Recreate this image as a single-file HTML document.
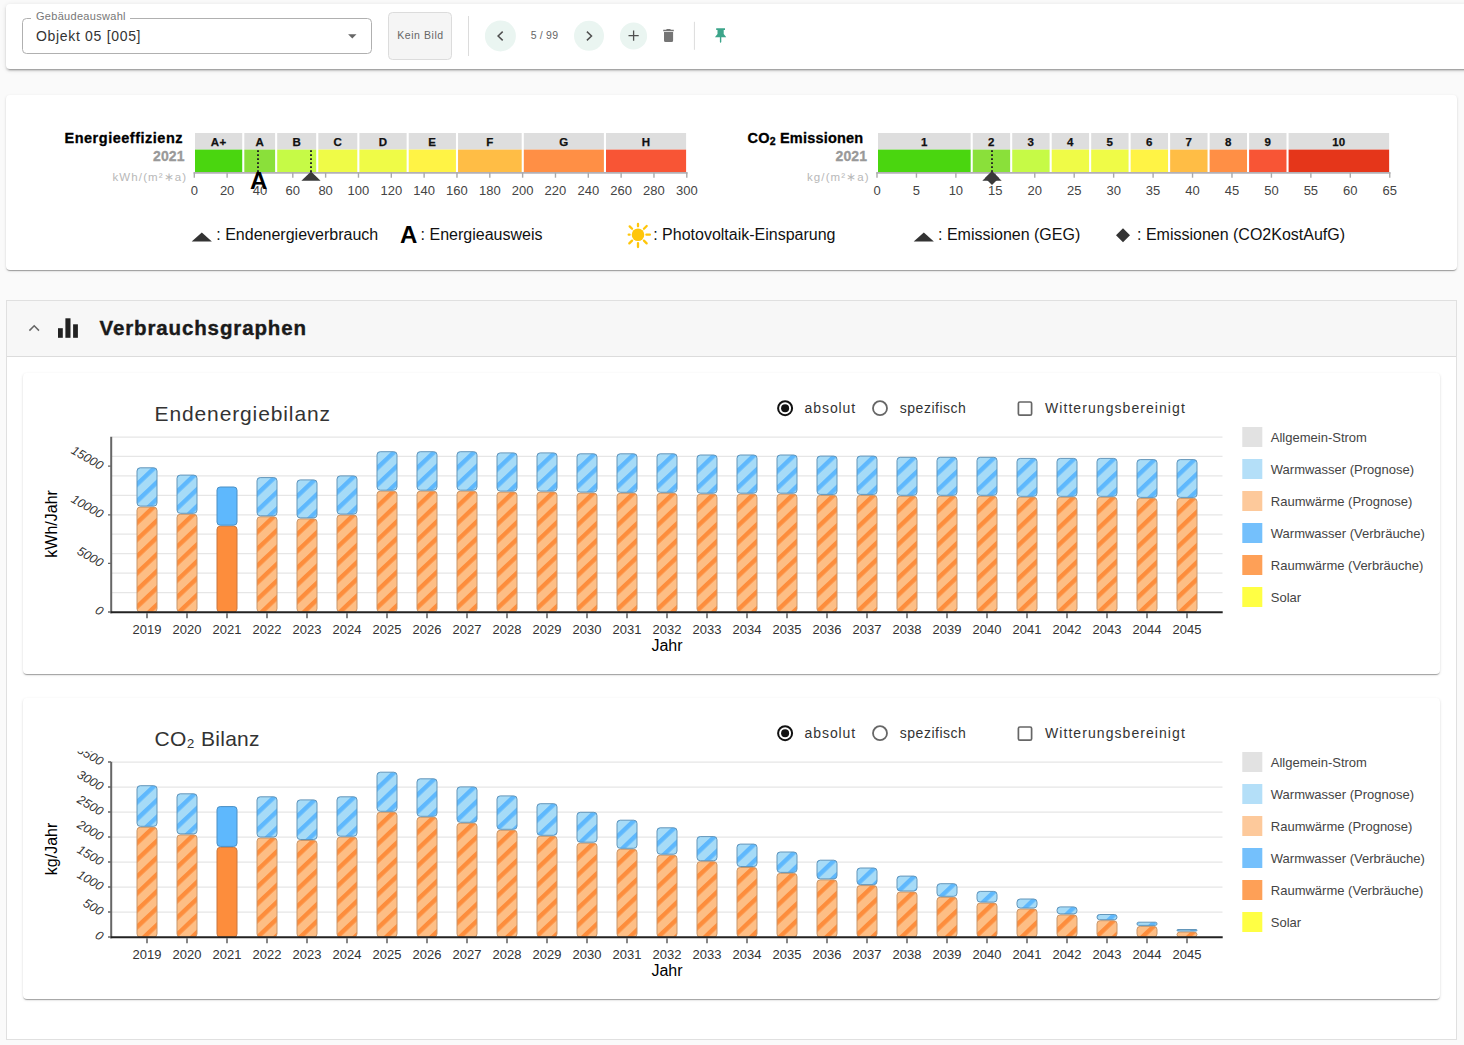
<!DOCTYPE html>
<html lang="de"><head><meta charset="utf-8"><title>Verbrauchsgraphen</title><style>
html,body{margin:0;padding:0}
body{width:1464px;height:1045px;overflow:hidden;background:#fafafa;position:relative;font-family:"Liberation Sans",sans-serif}
.topbar{position:absolute;left:6px;top:4px;width:1470px;height:65px;background:#fff;border-radius:4px;box-shadow:0 3px 1px -2px rgba(0,0,0,.2),0 2px 2px 0 rgba(0,0,0,.14),0 1px 5px 0 rgba(0,0,0,.12)}
.card1{position:absolute;left:6px;top:95px;width:1451px;height:175px;background:#fff;border-radius:4px;box-shadow:0 2px 1px -1px rgba(0,0,0,.2),0 1px 1px 0 rgba(0,0,0,.14),0 1px 3px 0 rgba(0,0,0,.12)}
.panel{position:absolute;left:6px;top:300px;width:1449px;height:738px;background:#fff;border:1px solid #e0e0e0;box-sizing:content-box}
.phead{position:absolute;left:0;top:0;width:100%;height:55px;background:#f7f7f7;border-bottom:1px solid #dcdcdc}
.ccard{position:absolute;left:23px;width:1417px;height:301px;background:#fff;border-radius:4px;box-shadow:0 2px 1px -1px rgba(0,0,0,.2),0 1px 1px 0 rgba(0,0,0,.14),0 1px 3px 0 rgba(0,0,0,.12)}
.ov{position:absolute;left:0;top:0}
</style></head><body>
<div class="topbar"></div>
<div class="card1"></div>
<div class="panel"><div class="phead"></div></div>
<div class="ccard" style="top:373px"></div>
<div class="ccard" style="top:698px"></div>

<svg class="ov" width="1464" height="1045" viewBox="0 0 1464 1045" font-family='"Liberation Sans", sans-serif'>
<defs>
<pattern id="po" width="12.2" height="12.2" patternUnits="userSpaceOnUse" patternTransform="translate(13.3,0) rotate(46.5)"><rect x="-1" y="-1" width="15" height="15" fill="#fdbe85"/><rect x="0" y="-1" width="4.4" height="15" fill="#fd8d3c"/></pattern>
<pattern id="pb" width="12.2" height="12.2" patternUnits="userSpaceOnUse" patternTransform="translate(13.3,0.9) rotate(46.5)"><rect x="-1" y="-1" width="15" height="15" fill="#a6dbf7"/><rect x="0" y="-1" width="4.4" height="15" fill="#5eb8fd"/></pattern>
</defs>
<rect x="22.5" y="18.5" width="349" height="35" rx="4" fill="none" stroke="#b0b0b0" stroke-width="1"/>
<rect x="31" y="14" width="99" height="8" fill="#fff"/>
<text x="36" y="19.8" font-size="11" fill="#777" textLength="89.5" lengthAdjust="spacing">Gebäudeauswahl</text>
<text x="36" y="41" font-size="14" fill="#333" textLength="104.5" lengthAdjust="spacing">Objekt 05 [005]</text>
<path d="M348.1 34.2 h8.4 l-4.2 4.2 z" fill="#666"/>
<rect x="388.5" y="12.5" width="63" height="47" rx="4" fill="#f5f5f5" stroke="#dcdcdc"/>
<text x="397.2" y="39" font-size="10.5" fill="#666" textLength="46" lengthAdjust="spacing">Kein Bild</text>
<rect x="468" y="16" width="1" height="40" fill="#dcdcdc"/>
<circle cx="500.4" cy="35.9" r="15.5" fill="#eaf5f1"/>
<path d="M502.7 31.6 L498.1 36 L502.7 40.4" fill="none" stroke="#505050" stroke-width="1.5"/>
<text x="530.7" y="38.8" font-size="10.5" fill="#666" textLength="27.3" lengthAdjust="spacing">5 / 99</text>
<circle cx="589" cy="35.8" r="15" fill="#eaf5f1"/>
<path d="M586.9 31.6 L591.5 36 L586.9 40.4" fill="none" stroke="#505050" stroke-width="1.5"/>
<circle cx="633.5" cy="36" r="13.6" fill="#eaf5f1"/>
<path d="M633.6 30.5 v10.2 M628.5 35.6 h10.2" fill="none" stroke="#505050" stroke-width="1.3"/>
<path d="M664 32.1 h9.1 v8.4 a1.5 1.5 0 0 1 -1.5 1.5 h-6.1 a1.5 1.5 0 0 1 -1.5 -1.5 z M663.2 31.3 v-1.6 h2.9 l0.7 -0.7 h3.4 l0.7 0.7 h2.9 v1.6 z" fill="#757575"/>
<rect x="693.9" y="21.8" width="1" height="28" fill="#dcdcdc"/>
<path d="M716.2 28.3 h8.8 v1.7 h-1.3 v4.1 l2.4 2.8 v0.3 h-4.8 v4.8 l-0.7 1 l-0.7 -1 v-4.8 h-4.8 v-0.3 l2.4 -2.8 v-4.1 h-1.3 z" fill="#3da58a"/>
<rect x="195.00" y="133" width="47.22" height="16.6" fill="#dedede"/>
<rect x="195.00" y="149.6" width="47.22" height="22.4" fill="#4ad60f"/>
<text x="218.61" y="145.8" font-size="11.5" fill="#111" font-weight="bold" text-anchor="middle" style="letter-spacing:0.3px" stroke="#111" stroke-width="0.25">A+</text>
<rect x="244.32" y="133" width="30.78" height="16.6" fill="#dedede"/>
<rect x="244.32" y="149.6" width="30.78" height="22.4" fill="#8ae03a"/>
<text x="259.71" y="145.8" font-size="11.5" fill="#111" font-weight="bold" text-anchor="middle" style="letter-spacing:0.3px" stroke="#111" stroke-width="0.25">A</text>
<rect x="277.20" y="133" width="39.00" height="16.6" fill="#dedede"/>
<rect x="277.20" y="149.6" width="39.00" height="22.4" fill="#c6fa46"/>
<text x="296.70" y="145.8" font-size="11.5" fill="#111" font-weight="bold" text-anchor="middle" style="letter-spacing:0.3px" stroke="#111" stroke-width="0.25">B</text>
<rect x="318.30" y="133" width="39.00" height="16.6" fill="#dedede"/>
<rect x="318.30" y="149.6" width="39.00" height="22.4" fill="#effb47"/>
<text x="337.80" y="145.8" font-size="11.5" fill="#111" font-weight="bold" text-anchor="middle" style="letter-spacing:0.3px" stroke="#111" stroke-width="0.25">C</text>
<rect x="359.40" y="133" width="47.22" height="16.6" fill="#dedede"/>
<rect x="359.40" y="149.6" width="47.22" height="22.4" fill="#effb47"/>
<text x="383.01" y="145.8" font-size="11.5" fill="#111" font-weight="bold" text-anchor="middle" style="letter-spacing:0.3px" stroke="#111" stroke-width="0.25">D</text>
<rect x="408.72" y="133" width="47.22" height="16.6" fill="#dedede"/>
<rect x="408.72" y="149.6" width="47.22" height="22.4" fill="#fff345"/>
<text x="432.33" y="145.8" font-size="11.5" fill="#111" font-weight="bold" text-anchor="middle" style="letter-spacing:0.3px" stroke="#111" stroke-width="0.25">E</text>
<rect x="458.04" y="133" width="63.66" height="16.6" fill="#dedede"/>
<rect x="458.04" y="149.6" width="63.66" height="22.4" fill="#ffbd45"/>
<text x="489.87" y="145.8" font-size="11.5" fill="#111" font-weight="bold" text-anchor="middle" style="letter-spacing:0.3px" stroke="#111" stroke-width="0.25">F</text>
<rect x="523.80" y="133" width="80.10" height="16.6" fill="#dedede"/>
<rect x="523.80" y="149.6" width="80.10" height="22.4" fill="#ff8f45"/>
<text x="563.85" y="145.8" font-size="11.5" fill="#111" font-weight="bold" text-anchor="middle" style="letter-spacing:0.3px" stroke="#111" stroke-width="0.25">G</text>
<rect x="606.00" y="133" width="80.10" height="16.6" fill="#dedede"/>
<rect x="606.00" y="149.6" width="80.10" height="22.4" fill="#f85535"/>
<text x="646.05" y="145.8" font-size="11.5" fill="#111" font-weight="bold" text-anchor="middle" style="letter-spacing:0.3px" stroke="#111" stroke-width="0.25">H</text>
<path d="M193.60000000000002 172.9 H687.5" stroke="#b3b0b6" stroke-width="1.7" fill="none"/>
<path d="M194.30 172.5 v5.2" stroke="#aaa" stroke-width="1.4" fill="none"/>
<text x="194.30" y="194.6" font-size="13" fill="#444" text-anchor="middle">0</text>
<path d="M227.13 172.5 v5.2" stroke="#aaa" stroke-width="1.4" fill="none"/>
<text x="227.13" y="194.6" font-size="13" fill="#444" text-anchor="middle">20</text>
<path d="M259.97 172.5 v5.2" stroke="#aaa" stroke-width="1.4" fill="none"/>
<text x="259.97" y="194.6" font-size="13" fill="#444" text-anchor="middle">40</text>
<path d="M292.80 172.5 v5.2" stroke="#aaa" stroke-width="1.4" fill="none"/>
<text x="292.80" y="194.6" font-size="13" fill="#444" text-anchor="middle">60</text>
<path d="M325.63 172.5 v5.2" stroke="#aaa" stroke-width="1.4" fill="none"/>
<text x="325.63" y="194.6" font-size="13" fill="#444" text-anchor="middle">80</text>
<path d="M358.47 172.5 v5.2" stroke="#aaa" stroke-width="1.4" fill="none"/>
<text x="358.47" y="194.6" font-size="13" fill="#444" text-anchor="middle">100</text>
<path d="M391.30 172.5 v5.2" stroke="#aaa" stroke-width="1.4" fill="none"/>
<text x="391.30" y="194.6" font-size="13" fill="#444" text-anchor="middle">120</text>
<path d="M424.13 172.5 v5.2" stroke="#aaa" stroke-width="1.4" fill="none"/>
<text x="424.13" y="194.6" font-size="13" fill="#444" text-anchor="middle">140</text>
<path d="M456.97 172.5 v5.2" stroke="#aaa" stroke-width="1.4" fill="none"/>
<text x="456.97" y="194.6" font-size="13" fill="#444" text-anchor="middle">160</text>
<path d="M489.80 172.5 v5.2" stroke="#aaa" stroke-width="1.4" fill="none"/>
<text x="489.80" y="194.6" font-size="13" fill="#444" text-anchor="middle">180</text>
<path d="M522.63 172.5 v5.2" stroke="#aaa" stroke-width="1.4" fill="none"/>
<text x="522.63" y="194.6" font-size="13" fill="#444" text-anchor="middle">200</text>
<path d="M555.47 172.5 v5.2" stroke="#aaa" stroke-width="1.4" fill="none"/>
<text x="555.47" y="194.6" font-size="13" fill="#444" text-anchor="middle">220</text>
<path d="M588.30 172.5 v5.2" stroke="#aaa" stroke-width="1.4" fill="none"/>
<text x="588.30" y="194.6" font-size="13" fill="#444" text-anchor="middle">240</text>
<path d="M621.13 172.5 v5.2" stroke="#aaa" stroke-width="1.4" fill="none"/>
<text x="621.13" y="194.6" font-size="13" fill="#444" text-anchor="middle">260</text>
<path d="M653.97 172.5 v5.2" stroke="#aaa" stroke-width="1.4" fill="none"/>
<text x="653.97" y="194.6" font-size="13" fill="#444" text-anchor="middle">280</text>
<path d="M686.80 172.5 v5.2" stroke="#aaa" stroke-width="1.4" fill="none"/>
<text x="686.80" y="194.6" font-size="13" fill="#444" text-anchor="middle">300</text>
<text x="182.5" y="143" font-size="14.5" fill="#000" font-weight="bold" text-anchor="end" textLength="118" lengthAdjust="spacing" stroke="#000" stroke-width="0.3">Energieeffizienz</text>
<text x="184.5" y="160.7" font-size="14" fill="#999" font-weight="bold" text-anchor="end" textLength="31.5" lengthAdjust="spacing" stroke="#999" stroke-width="0.3">2021</text>
<text x="186.2" y="181.2" font-size="11.5" fill="#b8b8b8" text-anchor="end" textLength="73.7" lengthAdjust="spacing">kWh/(m²∗a)</text>
<rect x="878.00" y="133" width="92.65" height="16.6" fill="#dedede"/>
<rect x="878.00" y="149.6" width="92.65" height="22.4" fill="#4ad60f"/>
<text x="924.33" y="145.8" font-size="11.5" fill="#111" font-weight="bold" text-anchor="middle" style="letter-spacing:0.3px" stroke="#111" stroke-width="0.25">1</text>
<rect x="972.75" y="133" width="37.38" height="16.6" fill="#dedede"/>
<rect x="972.75" y="149.6" width="37.38" height="22.4" fill="#8ae03a"/>
<text x="991.44" y="145.8" font-size="11.5" fill="#111" font-weight="bold" text-anchor="middle" style="letter-spacing:0.3px" stroke="#111" stroke-width="0.25">2</text>
<rect x="1012.23" y="133" width="37.38" height="16.6" fill="#dedede"/>
<rect x="1012.23" y="149.6" width="37.38" height="22.4" fill="#c6fa46"/>
<text x="1030.92" y="145.8" font-size="11.5" fill="#111" font-weight="bold" text-anchor="middle" style="letter-spacing:0.3px" stroke="#111" stroke-width="0.25">3</text>
<rect x="1051.71" y="133" width="37.38" height="16.6" fill="#dedede"/>
<rect x="1051.71" y="149.6" width="37.38" height="22.4" fill="#effb47"/>
<text x="1070.40" y="145.8" font-size="11.5" fill="#111" font-weight="bold" text-anchor="middle" style="letter-spacing:0.3px" stroke="#111" stroke-width="0.25">4</text>
<rect x="1091.19" y="133" width="37.38" height="16.6" fill="#dedede"/>
<rect x="1091.19" y="149.6" width="37.38" height="22.4" fill="#effb47"/>
<text x="1109.88" y="145.8" font-size="11.5" fill="#111" font-weight="bold" text-anchor="middle" style="letter-spacing:0.3px" stroke="#111" stroke-width="0.25">5</text>
<rect x="1130.67" y="133" width="37.38" height="16.6" fill="#dedede"/>
<rect x="1130.67" y="149.6" width="37.38" height="22.4" fill="#fff345"/>
<text x="1149.36" y="145.8" font-size="11.5" fill="#111" font-weight="bold" text-anchor="middle" style="letter-spacing:0.3px" stroke="#111" stroke-width="0.25">6</text>
<rect x="1170.15" y="133" width="37.38" height="16.6" fill="#dedede"/>
<rect x="1170.15" y="149.6" width="37.38" height="22.4" fill="#ffbd45"/>
<text x="1188.84" y="145.8" font-size="11.5" fill="#111" font-weight="bold" text-anchor="middle" style="letter-spacing:0.3px" stroke="#111" stroke-width="0.25">7</text>
<rect x="1209.63" y="133" width="37.38" height="16.6" fill="#dedede"/>
<rect x="1209.63" y="149.6" width="37.38" height="22.4" fill="#ff8f45"/>
<text x="1228.32" y="145.8" font-size="11.5" fill="#111" font-weight="bold" text-anchor="middle" style="letter-spacing:0.3px" stroke="#111" stroke-width="0.25">8</text>
<rect x="1249.11" y="133" width="37.38" height="16.6" fill="#dedede"/>
<rect x="1249.11" y="149.6" width="37.38" height="22.4" fill="#f85535"/>
<text x="1267.80" y="145.8" font-size="11.5" fill="#111" font-weight="bold" text-anchor="middle" style="letter-spacing:0.3px" stroke="#111" stroke-width="0.25">9</text>
<rect x="1288.59" y="133" width="100.55" height="16.6" fill="#dedede"/>
<rect x="1288.59" y="149.6" width="100.55" height="22.4" fill="#e5361a"/>
<text x="1338.87" y="145.8" font-size="11.5" fill="#111" font-weight="bold" text-anchor="middle" style="letter-spacing:0.3px" stroke="#111" stroke-width="0.25">10</text>
<path d="M876.3 172.9 H1390.45" stroke="#b3b0b6" stroke-width="1.7" fill="none"/>
<path d="M877.00 172.5 v5.2" stroke="#aaa" stroke-width="1.4" fill="none"/>
<text x="877.00" y="194.6" font-size="13" fill="#444" text-anchor="middle">0</text>
<path d="M916.44 172.5 v5.2" stroke="#aaa" stroke-width="1.4" fill="none"/>
<text x="916.44" y="194.6" font-size="13" fill="#444" text-anchor="middle">5</text>
<path d="M955.88 172.5 v5.2" stroke="#aaa" stroke-width="1.4" fill="none"/>
<text x="955.88" y="194.6" font-size="13" fill="#444" text-anchor="middle">10</text>
<path d="M995.33 172.5 v5.2" stroke="#aaa" stroke-width="1.4" fill="none"/>
<text x="995.33" y="194.6" font-size="13" fill="#444" text-anchor="middle">15</text>
<path d="M1034.77 172.5 v5.2" stroke="#aaa" stroke-width="1.4" fill="none"/>
<text x="1034.77" y="194.6" font-size="13" fill="#444" text-anchor="middle">20</text>
<path d="M1074.21 172.5 v5.2" stroke="#aaa" stroke-width="1.4" fill="none"/>
<text x="1074.21" y="194.6" font-size="13" fill="#444" text-anchor="middle">25</text>
<path d="M1113.65 172.5 v5.2" stroke="#aaa" stroke-width="1.4" fill="none"/>
<text x="1113.65" y="194.6" font-size="13" fill="#444" text-anchor="middle">30</text>
<path d="M1153.10 172.5 v5.2" stroke="#aaa" stroke-width="1.4" fill="none"/>
<text x="1153.10" y="194.6" font-size="13" fill="#444" text-anchor="middle">35</text>
<path d="M1192.54 172.5 v5.2" stroke="#aaa" stroke-width="1.4" fill="none"/>
<text x="1192.54" y="194.6" font-size="13" fill="#444" text-anchor="middle">40</text>
<path d="M1231.98 172.5 v5.2" stroke="#aaa" stroke-width="1.4" fill="none"/>
<text x="1231.98" y="194.6" font-size="13" fill="#444" text-anchor="middle">45</text>
<path d="M1271.42 172.5 v5.2" stroke="#aaa" stroke-width="1.4" fill="none"/>
<text x="1271.42" y="194.6" font-size="13" fill="#444" text-anchor="middle">50</text>
<path d="M1310.87 172.5 v5.2" stroke="#aaa" stroke-width="1.4" fill="none"/>
<text x="1310.87" y="194.6" font-size="13" fill="#444" text-anchor="middle">55</text>
<path d="M1350.31 172.5 v5.2" stroke="#aaa" stroke-width="1.4" fill="none"/>
<text x="1350.31" y="194.6" font-size="13" fill="#444" text-anchor="middle">60</text>
<path d="M1389.75 172.5 v5.2" stroke="#aaa" stroke-width="1.4" fill="none"/>
<text x="1389.75" y="194.6" font-size="13" fill="#444" text-anchor="middle">65</text>
<text x="863.2" y="143" font-size="14.5" fill="#000" font-weight="bold" text-anchor="end" textLength="115.7" lengthAdjust="spacing" stroke="#000" stroke-width="0.3">CO<tspan font-size="10.5" dy="1.5">2</tspan><tspan dy="-1.5"> Emissionen</tspan></text>
<text x="867" y="160.7" font-size="14" fill="#999" font-weight="bold" text-anchor="end" textLength="31.5" lengthAdjust="spacing" stroke="#999" stroke-width="0.3">2021</text>
<text x="868.7" y="181.2" font-size="11.5" fill="#b8b8b8" text-anchor="end" textLength="61.7" lengthAdjust="spacing">kg/(m²∗a)</text>
<path d="M258 150.2 V173" stroke="#222" stroke-width="1.9" stroke-dasharray="1.8 2.2" fill="none"/>
<text x="258.6" y="188.7" font-size="24" fill="#000" font-weight="bold" text-anchor="middle">A</text>
<path d="M311 150.2 V172" stroke="#222" stroke-width="1.9" stroke-dasharray="1.8 2.2" fill="none"/>
<path d="M311 171.6 L320.6 180.8 H301.4 Z" fill="#3a3a3a"/>
<path d="M992 150.2 V172" stroke="#222" stroke-width="1.9" stroke-dasharray="1.8 2.2" fill="none"/>
<path d="M992 171.6 L1001.7 180.8 H982.3 Z" fill="#3a3a3a"/>
<path d="M992 171 L999 178 L992 185 L985 178 Z" fill="#3a3a3a"/>
<path d="M201.8 232.4 L211.9 241.5 H191.7 Z" fill="#333"/>
<text x="216.3" y="240.2" font-size="16" fill="#111">: Endenergieverbrauch</text>
<text x="400" y="243" font-size="24" fill="#000" font-weight="bold">A</text>
<text x="420.6" y="240.2" font-size="16" fill="#111">: Energieausweis</text>
<circle cx="638.0" cy="234.7" r="6.3" fill="#ffc60a"/>
<path d="M646.40 234.70 L649.90 234.70 M643.94 240.64 L646.63 243.33 M638.00 243.10 L638.00 247.00 M632.06 240.64 L629.30 243.40 M629.60 234.70 L628.70 234.70 M632.06 228.76 L629.66 226.36 M638.00 226.30 L638.00 224.00 M643.94 228.76 L646.70 226.00 " stroke="#ffc60a" stroke-width="2.3" stroke-linecap="round" fill="none"/>
<text x="653.2" y="240.2" font-size="16" fill="#111">: Photovoltaik-Einsparung</text>
<path d="M923.8 232.4 L933.9 241.5 H913.7 Z" fill="#333"/>
<text x="938" y="240.2" font-size="16" fill="#111">: Emissionen (GEG)</text>
<path d="M1123 228.3 L1130 235.3 L1123 242.3 L1116 235.3 Z" fill="#333"/>
<text x="1137" y="240.2" font-size="16" fill="#111">: Emissionen (CO2KostAufG)</text>
<path d="M29.4 330.6 L34.2 325.8 L39 330.6" fill="none" stroke="#666" stroke-width="1.5"/>
<rect x="58" y="328.2" width="4.8" height="9.6" fill="#222"/><rect x="65.4" y="318.3" width="5.1" height="19.5" fill="#222"/><rect x="73.1" y="324.3" width="4.8" height="13.5" fill="#222"/>
<text x="99.5" y="335" font-size="20.5" fill="#1a1a1a" font-weight="bold" textLength="206.5" lengthAdjust="spacing" stroke="#1a1a1a" stroke-width="0.4">Verbrauchsgraphen</text>
<clipPath id="clip1"><rect x="22" y="426.4" width="1420" height="260"/></clipPath>
<text x="154.5" y="420.5" font-size="21" fill="#333" textLength="175.5" lengthAdjust="spacing">Endenergiebilanz</text>
<g clip-path="url(#clip1)">
<path d="M112 592.56 H1222.5" stroke="#e6e6e6" stroke-width="1.25" fill="none"/>
<path d="M112 573.11 H1222.5" stroke="#e6e6e6" stroke-width="1.25" fill="none"/>
<path d="M112 553.67 H1222.5" stroke="#e6e6e6" stroke-width="1.25" fill="none"/>
<path d="M112 534.22 H1222.5" stroke="#e6e6e6" stroke-width="1.25" fill="none"/>
<path d="M112 514.78 H1222.5" stroke="#e6e6e6" stroke-width="1.25" fill="none"/>
<path d="M112 495.33 H1222.5" stroke="#e6e6e6" stroke-width="1.25" fill="none"/>
<path d="M112 475.89 H1222.5" stroke="#e6e6e6" stroke-width="1.25" fill="none"/>
<path d="M112 456.44 H1222.5" stroke="#e6e6e6" stroke-width="1.25" fill="none"/>
<path d="M112 437.00 H1222.5" stroke="#e6e6e6" stroke-width="1.25" fill="none"/>
<g transform="translate(137,507.1)"><rect width="20" height="104.9" rx="3.2" fill="url(#po)" stroke="#c8966a" stroke-width="1"/></g>
<g transform="translate(137,467.8)"><rect width="20" height="38.3" rx="3.2" fill="url(#pb)" stroke="#6396ba" stroke-width="1"/></g>
<g transform="translate(177,514.3)"><rect width="20" height="97.7" rx="3.2" fill="url(#po)" stroke="#c8966a" stroke-width="1"/></g>
<g transform="translate(177,475.1)"><rect width="20" height="38.2" rx="3.2" fill="url(#pb)" stroke="#6396ba" stroke-width="1"/></g>
<g transform="translate(217,526.2)"><rect width="20" height="85.8" rx="3.2" fill="#fd8d3c" stroke="#c9773f" stroke-width="1"/></g>
<g transform="translate(217,487.0)"><rect width="20" height="38.2" rx="3.2" fill="#5eb8fd" stroke="#4a8fc4" stroke-width="1"/></g>
<g transform="translate(257,516.8)"><rect width="20" height="95.2" rx="3.2" fill="url(#po)" stroke="#c8966a" stroke-width="1"/></g>
<g transform="translate(257,477.6)"><rect width="20" height="38.2" rx="3.2" fill="url(#pb)" stroke="#6396ba" stroke-width="1"/></g>
<g transform="translate(297,518.9)"><rect width="20" height="93.1" rx="3.2" fill="url(#po)" stroke="#c8966a" stroke-width="1"/></g>
<g transform="translate(297,479.9)"><rect width="20" height="38.0" rx="3.2" fill="url(#pb)" stroke="#6396ba" stroke-width="1"/></g>
<g transform="translate(337,515.1)"><rect width="20" height="96.9" rx="3.2" fill="url(#po)" stroke="#c8966a" stroke-width="1"/></g>
<g transform="translate(337,475.9)"><rect width="20" height="38.2" rx="3.2" fill="url(#pb)" stroke="#6396ba" stroke-width="1"/></g>
<g transform="translate(377,491.2)"><rect width="20" height="120.8" rx="3.2" fill="url(#po)" stroke="#c8966a" stroke-width="1"/></g>
<g transform="translate(377,451.7)"><rect width="20" height="38.5" rx="3.2" fill="url(#pb)" stroke="#6396ba" stroke-width="1"/></g>
<g transform="translate(417,491.2)"><rect width="20" height="120.8" rx="3.2" fill="url(#po)" stroke="#c8966a" stroke-width="1"/></g>
<g transform="translate(417,451.7)"><rect width="20" height="38.5" rx="3.2" fill="url(#pb)" stroke="#6396ba" stroke-width="1"/></g>
<g transform="translate(457,491.2)"><rect width="20" height="120.8" rx="3.2" fill="url(#po)" stroke="#c8966a" stroke-width="1"/></g>
<g transform="translate(457,451.7)"><rect width="20" height="38.5" rx="3.2" fill="url(#pb)" stroke="#6396ba" stroke-width="1"/></g>
<g transform="translate(497,492.1)"><rect width="20" height="119.9" rx="3.2" fill="url(#po)" stroke="#c8966a" stroke-width="1"/></g>
<g transform="translate(497,452.9)"><rect width="20" height="38.2" rx="3.2" fill="url(#pb)" stroke="#6396ba" stroke-width="1"/></g>
<g transform="translate(537,492.1)"><rect width="20" height="119.9" rx="3.2" fill="url(#po)" stroke="#c8966a" stroke-width="1"/></g>
<g transform="translate(537,452.9)"><rect width="20" height="38.2" rx="3.2" fill="url(#pb)" stroke="#6396ba" stroke-width="1"/></g>
<g transform="translate(577,493.1)"><rect width="20" height="118.9" rx="3.2" fill="url(#po)" stroke="#c8966a" stroke-width="1"/></g>
<g transform="translate(577,453.8)"><rect width="20" height="38.3" rx="3.2" fill="url(#pb)" stroke="#6396ba" stroke-width="1"/></g>
<g transform="translate(617,493.3)"><rect width="20" height="118.7" rx="3.2" fill="url(#po)" stroke="#c8966a" stroke-width="1"/></g>
<g transform="translate(617,453.8)"><rect width="20" height="38.5" rx="3.2" fill="url(#pb)" stroke="#6396ba" stroke-width="1"/></g>
<g transform="translate(657,493.3)"><rect width="20" height="118.7" rx="3.2" fill="url(#po)" stroke="#c8966a" stroke-width="1"/></g>
<g transform="translate(657,453.8)"><rect width="20" height="38.5" rx="3.2" fill="url(#pb)" stroke="#6396ba" stroke-width="1"/></g>
<g transform="translate(697,494.2)"><rect width="20" height="117.8" rx="3.2" fill="url(#po)" stroke="#c8966a" stroke-width="1"/></g>
<g transform="translate(697,455.0)"><rect width="20" height="38.2" rx="3.2" fill="url(#pb)" stroke="#6396ba" stroke-width="1"/></g>
<g transform="translate(737,494.2)"><rect width="20" height="117.8" rx="3.2" fill="url(#po)" stroke="#c8966a" stroke-width="1"/></g>
<g transform="translate(737,455.0)"><rect width="20" height="38.2" rx="3.2" fill="url(#pb)" stroke="#6396ba" stroke-width="1"/></g>
<g transform="translate(777,494.2)"><rect width="20" height="117.8" rx="3.2" fill="url(#po)" stroke="#c8966a" stroke-width="1"/></g>
<g transform="translate(777,455.0)"><rect width="20" height="38.2" rx="3.2" fill="url(#pb)" stroke="#6396ba" stroke-width="1"/></g>
<g transform="translate(817,495.4)"><rect width="20" height="116.6" rx="3.2" fill="url(#po)" stroke="#c8966a" stroke-width="1"/></g>
<g transform="translate(817,456.1)"><rect width="20" height="38.3" rx="3.2" fill="url(#pb)" stroke="#6396ba" stroke-width="1"/></g>
<g transform="translate(857,495.4)"><rect width="20" height="116.6" rx="3.2" fill="url(#po)" stroke="#c8966a" stroke-width="1"/></g>
<g transform="translate(857,456.1)"><rect width="20" height="38.3" rx="3.2" fill="url(#pb)" stroke="#6396ba" stroke-width="1"/></g>
<g transform="translate(897,496.3)"><rect width="20" height="115.7" rx="3.2" fill="url(#po)" stroke="#c8966a" stroke-width="1"/></g>
<g transform="translate(897,457.3)"><rect width="20" height="38.0" rx="3.2" fill="url(#pb)" stroke="#6396ba" stroke-width="1"/></g>
<g transform="translate(937,496.3)"><rect width="20" height="115.7" rx="3.2" fill="url(#po)" stroke="#c8966a" stroke-width="1"/></g>
<g transform="translate(937,457.3)"><rect width="20" height="38.0" rx="3.2" fill="url(#pb)" stroke="#6396ba" stroke-width="1"/></g>
<g transform="translate(977,496.3)"><rect width="20" height="115.7" rx="3.2" fill="url(#po)" stroke="#c8966a" stroke-width="1"/></g>
<g transform="translate(977,457.3)"><rect width="20" height="38.0" rx="3.2" fill="url(#pb)" stroke="#6396ba" stroke-width="1"/></g>
<g transform="translate(1017,497.3)"><rect width="20" height="114.7" rx="3.2" fill="url(#po)" stroke="#c8966a" stroke-width="1"/></g>
<g transform="translate(1017,458.4)"><rect width="20" height="37.9" rx="3.2" fill="url(#pb)" stroke="#6396ba" stroke-width="1"/></g>
<g transform="translate(1057,497.3)"><rect width="20" height="114.7" rx="3.2" fill="url(#po)" stroke="#c8966a" stroke-width="1"/></g>
<g transform="translate(1057,458.4)"><rect width="20" height="37.9" rx="3.2" fill="url(#pb)" stroke="#6396ba" stroke-width="1"/></g>
<g transform="translate(1097,497.3)"><rect width="20" height="114.7" rx="3.2" fill="url(#po)" stroke="#c8966a" stroke-width="1"/></g>
<g transform="translate(1097,458.4)"><rect width="20" height="37.9" rx="3.2" fill="url(#pb)" stroke="#6396ba" stroke-width="1"/></g>
<g transform="translate(1137,498.4)"><rect width="20" height="113.6" rx="3.2" fill="url(#po)" stroke="#c8966a" stroke-width="1"/></g>
<g transform="translate(1137,459.6)"><rect width="20" height="37.8" rx="3.2" fill="url(#pb)" stroke="#6396ba" stroke-width="1"/></g>
<g transform="translate(1177,498.4)"><rect width="20" height="113.6" rx="3.2" fill="url(#po)" stroke="#c8966a" stroke-width="1"/></g>
<g transform="translate(1177,459.6)"><rect width="20" height="37.8" rx="3.2" fill="url(#pb)" stroke="#6396ba" stroke-width="1"/></g>
<path d="M111.2 436.8 V613.3" stroke="#666" stroke-width="2" fill="none"/>
<path d="M110.2 612.3 H1222.7" stroke="#222" stroke-width="2" fill="none"/>
<path d="M147 613.3 v5" stroke="#444" stroke-width="1.3" fill="none"/>
<text x="147" y="633.7" font-size="13" fill="#333" text-anchor="middle">2019</text>
<path d="M187 613.3 v5" stroke="#444" stroke-width="1.3" fill="none"/>
<text x="187" y="633.7" font-size="13" fill="#333" text-anchor="middle">2020</text>
<path d="M227 613.3 v5" stroke="#444" stroke-width="1.3" fill="none"/>
<text x="227" y="633.7" font-size="13" fill="#333" text-anchor="middle">2021</text>
<path d="M267 613.3 v5" stroke="#444" stroke-width="1.3" fill="none"/>
<text x="267" y="633.7" font-size="13" fill="#333" text-anchor="middle">2022</text>
<path d="M307 613.3 v5" stroke="#444" stroke-width="1.3" fill="none"/>
<text x="307" y="633.7" font-size="13" fill="#333" text-anchor="middle">2023</text>
<path d="M347 613.3 v5" stroke="#444" stroke-width="1.3" fill="none"/>
<text x="347" y="633.7" font-size="13" fill="#333" text-anchor="middle">2024</text>
<path d="M387 613.3 v5" stroke="#444" stroke-width="1.3" fill="none"/>
<text x="387" y="633.7" font-size="13" fill="#333" text-anchor="middle">2025</text>
<path d="M427 613.3 v5" stroke="#444" stroke-width="1.3" fill="none"/>
<text x="427" y="633.7" font-size="13" fill="#333" text-anchor="middle">2026</text>
<path d="M467 613.3 v5" stroke="#444" stroke-width="1.3" fill="none"/>
<text x="467" y="633.7" font-size="13" fill="#333" text-anchor="middle">2027</text>
<path d="M507 613.3 v5" stroke="#444" stroke-width="1.3" fill="none"/>
<text x="507" y="633.7" font-size="13" fill="#333" text-anchor="middle">2028</text>
<path d="M547 613.3 v5" stroke="#444" stroke-width="1.3" fill="none"/>
<text x="547" y="633.7" font-size="13" fill="#333" text-anchor="middle">2029</text>
<path d="M587 613.3 v5" stroke="#444" stroke-width="1.3" fill="none"/>
<text x="587" y="633.7" font-size="13" fill="#333" text-anchor="middle">2030</text>
<path d="M627 613.3 v5" stroke="#444" stroke-width="1.3" fill="none"/>
<text x="627" y="633.7" font-size="13" fill="#333" text-anchor="middle">2031</text>
<path d="M667 613.3 v5" stroke="#444" stroke-width="1.3" fill="none"/>
<text x="667" y="633.7" font-size="13" fill="#333" text-anchor="middle">2032</text>
<path d="M707 613.3 v5" stroke="#444" stroke-width="1.3" fill="none"/>
<text x="707" y="633.7" font-size="13" fill="#333" text-anchor="middle">2033</text>
<path d="M747 613.3 v5" stroke="#444" stroke-width="1.3" fill="none"/>
<text x="747" y="633.7" font-size="13" fill="#333" text-anchor="middle">2034</text>
<path d="M787 613.3 v5" stroke="#444" stroke-width="1.3" fill="none"/>
<text x="787" y="633.7" font-size="13" fill="#333" text-anchor="middle">2035</text>
<path d="M827 613.3 v5" stroke="#444" stroke-width="1.3" fill="none"/>
<text x="827" y="633.7" font-size="13" fill="#333" text-anchor="middle">2036</text>
<path d="M867 613.3 v5" stroke="#444" stroke-width="1.3" fill="none"/>
<text x="867" y="633.7" font-size="13" fill="#333" text-anchor="middle">2037</text>
<path d="M907 613.3 v5" stroke="#444" stroke-width="1.3" fill="none"/>
<text x="907" y="633.7" font-size="13" fill="#333" text-anchor="middle">2038</text>
<path d="M947 613.3 v5" stroke="#444" stroke-width="1.3" fill="none"/>
<text x="947" y="633.7" font-size="13" fill="#333" text-anchor="middle">2039</text>
<path d="M987 613.3 v5" stroke="#444" stroke-width="1.3" fill="none"/>
<text x="987" y="633.7" font-size="13" fill="#333" text-anchor="middle">2040</text>
<path d="M1027 613.3 v5" stroke="#444" stroke-width="1.3" fill="none"/>
<text x="1027" y="633.7" font-size="13" fill="#333" text-anchor="middle">2041</text>
<path d="M1067 613.3 v5" stroke="#444" stroke-width="1.3" fill="none"/>
<text x="1067" y="633.7" font-size="13" fill="#333" text-anchor="middle">2042</text>
<path d="M1107 613.3 v5" stroke="#444" stroke-width="1.3" fill="none"/>
<text x="1107" y="633.7" font-size="13" fill="#333" text-anchor="middle">2043</text>
<path d="M1147 613.3 v5" stroke="#444" stroke-width="1.3" fill="none"/>
<text x="1147" y="633.7" font-size="13" fill="#333" text-anchor="middle">2044</text>
<path d="M1187 613.3 v5" stroke="#444" stroke-width="1.3" fill="none"/>
<text x="1187" y="633.7" font-size="13" fill="#333" text-anchor="middle">2045</text>
<text x="667" y="650.5" font-size="16" fill="#000" text-anchor="middle">Jahr</text>
<path d="M108 612.0 h3" stroke="#666" stroke-width="1.3" fill="none"/>
<text transform="translate(100.3,616.0) rotate(30)" font-size="12.5" font-style="italic" fill="#333" text-anchor="end">0</text>
<path d="M108 563.4 h3" stroke="#666" stroke-width="1.3" fill="none"/>
<text transform="translate(100.3,567.4) rotate(30)" font-size="12.5" font-style="italic" fill="#333" text-anchor="end">5000</text>
<path d="M108 514.8 h3" stroke="#666" stroke-width="1.3" fill="none"/>
<text transform="translate(100.3,518.8) rotate(30)" font-size="12.5" font-style="italic" fill="#333" text-anchor="end">10000</text>
<path d="M108 466.2 h3" stroke="#666" stroke-width="1.3" fill="none"/>
<text transform="translate(100.3,470.2) rotate(30)" font-size="12.5" font-style="italic" fill="#333" text-anchor="end">15000</text>
<text transform="translate(57,523.9) rotate(-90)" font-size="16" fill="#000" text-anchor="middle">kWh/Jahr</text>
</g>
<circle cx="785.1" cy="408.2" r="7" fill="none" stroke="#111" stroke-width="2"/><circle cx="785.1" cy="408.2" r="4" fill="#111"/>
<text x="804.6" y="413.3" font-size="14" fill="#333" textLength="50.6" lengthAdjust="spacing">absolut</text>
<circle cx="880" cy="408.2" r="7" fill="none" stroke="#666" stroke-width="1.8"/>
<text x="899.8" y="413.3" font-size="14" fill="#333" textLength="66" lengthAdjust="spacing">spezifisch</text>
<rect x="1018.4" y="402" width="13.2" height="13.2" rx="1.5" fill="none" stroke="#666" stroke-width="1.7"/>
<text x="1045" y="413.3" font-size="14" fill="#333" textLength="139.8" lengthAdjust="spacing">Witterungsbereinigt</text>
<rect x="1242.3" y="427" width="20" height="20" fill="#e2e2e2"/>
<text x="1270.8" y="441.7" font-size="13" fill="#444">Allgemein-Strom</text>
<rect x="1242.3" y="459" width="20" height="20" fill="#b4dff8"/>
<text x="1270.8" y="473.7" font-size="13" fill="#444">Warmwasser (Prognose)</text>
<rect x="1242.3" y="491" width="20" height="20" fill="#fdc99b"/>
<text x="1270.8" y="505.7" font-size="13" fill="#444">Raumwärme (Prognose)</text>
<rect x="1242.3" y="523" width="20" height="20" fill="#74c0fc"/>
<text x="1270.8" y="537.7" font-size="13" fill="#444">Warmwasser (Verbräuche)</text>
<rect x="1242.3" y="555" width="20" height="20" fill="#fea057"/>
<text x="1270.8" y="569.7" font-size="13" fill="#444">Raumwärme (Verbräuche)</text>
<rect x="1242.3" y="587" width="20" height="20" fill="#ffff44"/>
<text x="1270.8" y="601.7" font-size="13" fill="#444">Solar</text>
<clipPath id="clip2"><rect x="22" y="751.4" width="1420" height="260"/></clipPath>
<text x="154.5" y="745.5" font-size="21" fill="#333" textLength="105" lengthAdjust="spacing">CO₂ Bilanz</text>
<g clip-path="url(#clip2)">
<path d="M112 912.00 H1222.5" stroke="#e6e6e6" stroke-width="1.25" fill="none"/>
<path d="M112 887.00 H1222.5" stroke="#e6e6e6" stroke-width="1.25" fill="none"/>
<path d="M112 862.00 H1222.5" stroke="#e6e6e6" stroke-width="1.25" fill="none"/>
<path d="M112 837.00 H1222.5" stroke="#e6e6e6" stroke-width="1.25" fill="none"/>
<path d="M112 812.00 H1222.5" stroke="#e6e6e6" stroke-width="1.25" fill="none"/>
<path d="M112 787.00 H1222.5" stroke="#e6e6e6" stroke-width="1.25" fill="none"/>
<path d="M112 762.00 H1222.5" stroke="#e6e6e6" stroke-width="1.25" fill="none"/>
<g transform="translate(137,827.3)"><rect width="20" height="109.7" rx="3.2" fill="url(#po)" stroke="#c8966a" stroke-width="1"/></g>
<g transform="translate(137,785.7)"><rect width="20" height="40.6" rx="3.2" fill="url(#pb)" stroke="#6396ba" stroke-width="1"/></g>
<g transform="translate(177,834.9)"><rect width="20" height="102.1" rx="3.2" fill="url(#po)" stroke="#c8966a" stroke-width="1"/></g>
<g transform="translate(177,793.8)"><rect width="20" height="40.1" rx="3.2" fill="url(#pb)" stroke="#6396ba" stroke-width="1"/></g>
<g transform="translate(217,847.4)"><rect width="20" height="89.6" rx="3.2" fill="#fd8d3c" stroke="#c9773f" stroke-width="1"/></g>
<g transform="translate(217,806.6)"><rect width="20" height="39.8" rx="3.2" fill="#5eb8fd" stroke="#4a8fc4" stroke-width="1"/></g>
<g transform="translate(257,838.0)"><rect width="20" height="99.0" rx="3.2" fill="url(#po)" stroke="#c8966a" stroke-width="1"/></g>
<g transform="translate(257,796.8)"><rect width="20" height="40.2" rx="3.2" fill="url(#pb)" stroke="#6396ba" stroke-width="1"/></g>
<g transform="translate(297,840.5)"><rect width="20" height="96.5" rx="3.2" fill="url(#po)" stroke="#c8966a" stroke-width="1"/></g>
<g transform="translate(297,799.9)"><rect width="20" height="39.6" rx="3.2" fill="url(#pb)" stroke="#6396ba" stroke-width="1"/></g>
<g transform="translate(337,837.2)"><rect width="20" height="99.8" rx="3.2" fill="url(#po)" stroke="#c8966a" stroke-width="1"/></g>
<g transform="translate(337,796.8)"><rect width="20" height="39.4" rx="3.2" fill="url(#pb)" stroke="#6396ba" stroke-width="1"/></g>
<g transform="translate(377,812.3)"><rect width="20" height="124.7" rx="3.2" fill="url(#po)" stroke="#c8966a" stroke-width="1"/></g>
<g transform="translate(377,772.2)"><rect width="20" height="39.1" rx="3.2" fill="url(#pb)" stroke="#6396ba" stroke-width="1"/></g>
<g transform="translate(417,817.3)"><rect width="20" height="119.7" rx="3.2" fill="url(#po)" stroke="#c8966a" stroke-width="1"/></g>
<g transform="translate(417,778.8)"><rect width="20" height="37.5" rx="3.2" fill="url(#pb)" stroke="#6396ba" stroke-width="1"/></g>
<g transform="translate(457,823.3)"><rect width="20" height="113.7" rx="3.2" fill="url(#po)" stroke="#c8966a" stroke-width="1"/></g>
<g transform="translate(457,786.9)"><rect width="20" height="35.4" rx="3.2" fill="url(#pb)" stroke="#6396ba" stroke-width="1"/></g>
<g transform="translate(497,830.3)"><rect width="20" height="106.7" rx="3.2" fill="url(#po)" stroke="#c8966a" stroke-width="1"/></g>
<g transform="translate(497,795.9)"><rect width="20" height="33.4" rx="3.2" fill="url(#pb)" stroke="#6396ba" stroke-width="1"/></g>
<g transform="translate(537,836.3)"><rect width="20" height="100.7" rx="3.2" fill="url(#po)" stroke="#c8966a" stroke-width="1"/></g>
<g transform="translate(537,803.7)"><rect width="20" height="31.6" rx="3.2" fill="url(#pb)" stroke="#6396ba" stroke-width="1"/></g>
<g transform="translate(577,843.2)"><rect width="20" height="93.8" rx="3.2" fill="url(#po)" stroke="#c8966a" stroke-width="1"/></g>
<g transform="translate(577,812.3)"><rect width="20" height="29.9" rx="3.2" fill="url(#pb)" stroke="#6396ba" stroke-width="1"/></g>
<g transform="translate(617,849.3)"><rect width="20" height="87.7" rx="3.2" fill="url(#po)" stroke="#c8966a" stroke-width="1"/></g>
<g transform="translate(617,820.2)"><rect width="20" height="28.1" rx="3.2" fill="url(#pb)" stroke="#6396ba" stroke-width="1"/></g>
<g transform="translate(657,855.2)"><rect width="20" height="81.8" rx="3.2" fill="url(#po)" stroke="#c8966a" stroke-width="1"/></g>
<g transform="translate(657,827.8)"><rect width="20" height="26.4" rx="3.2" fill="url(#pb)" stroke="#6396ba" stroke-width="1"/></g>
<g transform="translate(697,861.7)"><rect width="20" height="75.3" rx="3.2" fill="url(#po)" stroke="#c8966a" stroke-width="1"/></g>
<g transform="translate(697,836.6)"><rect width="20" height="24.1" rx="3.2" fill="url(#pb)" stroke="#6396ba" stroke-width="1"/></g>
<g transform="translate(737,867.5)"><rect width="20" height="69.5" rx="3.2" fill="url(#po)" stroke="#c8966a" stroke-width="1"/></g>
<g transform="translate(737,844.1)"><rect width="20" height="22.4" rx="3.2" fill="url(#pb)" stroke="#6396ba" stroke-width="1"/></g>
<g transform="translate(777,873.4)"><rect width="20" height="63.6" rx="3.2" fill="url(#po)" stroke="#c8966a" stroke-width="1"/></g>
<g transform="translate(777,852.0)"><rect width="20" height="20.4" rx="3.2" fill="url(#pb)" stroke="#6396ba" stroke-width="1"/></g>
<g transform="translate(817,879.9)"><rect width="20" height="57.1" rx="3.2" fill="url(#po)" stroke="#c8966a" stroke-width="1"/></g>
<g transform="translate(817,860.2)"><rect width="20" height="18.7" rx="3.2" fill="url(#pb)" stroke="#6396ba" stroke-width="1"/></g>
<g transform="translate(857,885.6)"><rect width="20" height="51.4" rx="3.2" fill="url(#po)" stroke="#c8966a" stroke-width="1"/></g>
<g transform="translate(857,868.0)"><rect width="20" height="16.6" rx="3.2" fill="url(#pb)" stroke="#6396ba" stroke-width="1"/></g>
<g transform="translate(897,892.0)"><rect width="20" height="45.0" rx="3.2" fill="url(#po)" stroke="#c8966a" stroke-width="1"/></g>
<g transform="translate(897,876.1)"><rect width="20" height="14.9" rx="3.2" fill="url(#pb)" stroke="#6396ba" stroke-width="1"/></g>
<g transform="translate(937,897.3)"><rect width="20" height="39.7" rx="3.2" fill="url(#po)" stroke="#c8966a" stroke-width="1"/></g>
<g transform="translate(937,883.7)"><rect width="20" height="12.6" rx="3.2" fill="url(#pb)" stroke="#6396ba" stroke-width="1"/></g>
<g transform="translate(977,903.1)"><rect width="20" height="33.9" rx="3.2" fill="url(#po)" stroke="#c8966a" stroke-width="1"/></g>
<g transform="translate(977,891.4)"><rect width="20" height="10.7" rx="3.2" fill="url(#pb)" stroke="#6396ba" stroke-width="1"/></g>
<g transform="translate(1017,909.0)"><rect width="20" height="28.0" rx="3.2" fill="url(#po)" stroke="#c8966a" stroke-width="1"/></g>
<g transform="translate(1017,899.0)"><rect width="20" height="9.0" rx="3.2" fill="url(#pb)" stroke="#6396ba" stroke-width="1"/></g>
<g transform="translate(1057,914.9)"><rect width="20" height="22.1" rx="3.2" fill="url(#po)" stroke="#c8966a" stroke-width="1"/></g>
<g transform="translate(1057,906.9)"><rect width="20" height="7.0" rx="3.2" fill="url(#pb)" stroke="#6396ba" stroke-width="1"/></g>
<g transform="translate(1097,920.7)"><rect width="20" height="16.3" rx="3.2" fill="url(#po)" stroke="#c8966a" stroke-width="1"/></g>
<g transform="translate(1097,914.5)"><rect width="20" height="5.2" rx="2.6" fill="url(#pb)" stroke="#6396ba" stroke-width="1"/></g>
<g transform="translate(1137,926.4)"><rect width="20" height="10.6" rx="3.2" fill="url(#po)" stroke="#c8966a" stroke-width="1"/></g>
<g transform="translate(1137,922.2)"><rect width="20" height="3.2" rx="1.6" fill="url(#pb)" stroke="#6396ba" stroke-width="1"/></g>
<g transform="translate(1177,932.0)"><rect width="20" height="5.0" rx="3.2" fill="url(#po)" stroke="#c8966a" stroke-width="1"/></g>
<g transform="translate(1177,929.5)"><rect width="20" height="1.5" rx="0.8" fill="url(#pb)" stroke="#6396ba" stroke-width="1"/></g>
<path d="M111.2 761.8 V938.3" stroke="#666" stroke-width="2" fill="none"/>
<path d="M110.2 937.3 H1222.7" stroke="#222" stroke-width="2" fill="none"/>
<path d="M147 938.3 v5" stroke="#444" stroke-width="1.3" fill="none"/>
<text x="147" y="958.7" font-size="13" fill="#333" text-anchor="middle">2019</text>
<path d="M187 938.3 v5" stroke="#444" stroke-width="1.3" fill="none"/>
<text x="187" y="958.7" font-size="13" fill="#333" text-anchor="middle">2020</text>
<path d="M227 938.3 v5" stroke="#444" stroke-width="1.3" fill="none"/>
<text x="227" y="958.7" font-size="13" fill="#333" text-anchor="middle">2021</text>
<path d="M267 938.3 v5" stroke="#444" stroke-width="1.3" fill="none"/>
<text x="267" y="958.7" font-size="13" fill="#333" text-anchor="middle">2022</text>
<path d="M307 938.3 v5" stroke="#444" stroke-width="1.3" fill="none"/>
<text x="307" y="958.7" font-size="13" fill="#333" text-anchor="middle">2023</text>
<path d="M347 938.3 v5" stroke="#444" stroke-width="1.3" fill="none"/>
<text x="347" y="958.7" font-size="13" fill="#333" text-anchor="middle">2024</text>
<path d="M387 938.3 v5" stroke="#444" stroke-width="1.3" fill="none"/>
<text x="387" y="958.7" font-size="13" fill="#333" text-anchor="middle">2025</text>
<path d="M427 938.3 v5" stroke="#444" stroke-width="1.3" fill="none"/>
<text x="427" y="958.7" font-size="13" fill="#333" text-anchor="middle">2026</text>
<path d="M467 938.3 v5" stroke="#444" stroke-width="1.3" fill="none"/>
<text x="467" y="958.7" font-size="13" fill="#333" text-anchor="middle">2027</text>
<path d="M507 938.3 v5" stroke="#444" stroke-width="1.3" fill="none"/>
<text x="507" y="958.7" font-size="13" fill="#333" text-anchor="middle">2028</text>
<path d="M547 938.3 v5" stroke="#444" stroke-width="1.3" fill="none"/>
<text x="547" y="958.7" font-size="13" fill="#333" text-anchor="middle">2029</text>
<path d="M587 938.3 v5" stroke="#444" stroke-width="1.3" fill="none"/>
<text x="587" y="958.7" font-size="13" fill="#333" text-anchor="middle">2030</text>
<path d="M627 938.3 v5" stroke="#444" stroke-width="1.3" fill="none"/>
<text x="627" y="958.7" font-size="13" fill="#333" text-anchor="middle">2031</text>
<path d="M667 938.3 v5" stroke="#444" stroke-width="1.3" fill="none"/>
<text x="667" y="958.7" font-size="13" fill="#333" text-anchor="middle">2032</text>
<path d="M707 938.3 v5" stroke="#444" stroke-width="1.3" fill="none"/>
<text x="707" y="958.7" font-size="13" fill="#333" text-anchor="middle">2033</text>
<path d="M747 938.3 v5" stroke="#444" stroke-width="1.3" fill="none"/>
<text x="747" y="958.7" font-size="13" fill="#333" text-anchor="middle">2034</text>
<path d="M787 938.3 v5" stroke="#444" stroke-width="1.3" fill="none"/>
<text x="787" y="958.7" font-size="13" fill="#333" text-anchor="middle">2035</text>
<path d="M827 938.3 v5" stroke="#444" stroke-width="1.3" fill="none"/>
<text x="827" y="958.7" font-size="13" fill="#333" text-anchor="middle">2036</text>
<path d="M867 938.3 v5" stroke="#444" stroke-width="1.3" fill="none"/>
<text x="867" y="958.7" font-size="13" fill="#333" text-anchor="middle">2037</text>
<path d="M907 938.3 v5" stroke="#444" stroke-width="1.3" fill="none"/>
<text x="907" y="958.7" font-size="13" fill="#333" text-anchor="middle">2038</text>
<path d="M947 938.3 v5" stroke="#444" stroke-width="1.3" fill="none"/>
<text x="947" y="958.7" font-size="13" fill="#333" text-anchor="middle">2039</text>
<path d="M987 938.3 v5" stroke="#444" stroke-width="1.3" fill="none"/>
<text x="987" y="958.7" font-size="13" fill="#333" text-anchor="middle">2040</text>
<path d="M1027 938.3 v5" stroke="#444" stroke-width="1.3" fill="none"/>
<text x="1027" y="958.7" font-size="13" fill="#333" text-anchor="middle">2041</text>
<path d="M1067 938.3 v5" stroke="#444" stroke-width="1.3" fill="none"/>
<text x="1067" y="958.7" font-size="13" fill="#333" text-anchor="middle">2042</text>
<path d="M1107 938.3 v5" stroke="#444" stroke-width="1.3" fill="none"/>
<text x="1107" y="958.7" font-size="13" fill="#333" text-anchor="middle">2043</text>
<path d="M1147 938.3 v5" stroke="#444" stroke-width="1.3" fill="none"/>
<text x="1147" y="958.7" font-size="13" fill="#333" text-anchor="middle">2044</text>
<path d="M1187 938.3 v5" stroke="#444" stroke-width="1.3" fill="none"/>
<text x="1187" y="958.7" font-size="13" fill="#333" text-anchor="middle">2045</text>
<text x="667" y="975.5" font-size="16" fill="#000" text-anchor="middle">Jahr</text>
<path d="M108 937.0 h3" stroke="#666" stroke-width="1.3" fill="none"/>
<text transform="translate(100.3,941.0) rotate(30)" font-size="12.5" font-style="italic" fill="#333" text-anchor="end">0</text>
<path d="M108 912.0 h3" stroke="#666" stroke-width="1.3" fill="none"/>
<text transform="translate(100.3,916.0) rotate(30)" font-size="12.5" font-style="italic" fill="#333" text-anchor="end">500</text>
<path d="M108 887.0 h3" stroke="#666" stroke-width="1.3" fill="none"/>
<text transform="translate(100.3,891.0) rotate(30)" font-size="12.5" font-style="italic" fill="#333" text-anchor="end">1000</text>
<path d="M108 862.0 h3" stroke="#666" stroke-width="1.3" fill="none"/>
<text transform="translate(100.3,866.0) rotate(30)" font-size="12.5" font-style="italic" fill="#333" text-anchor="end">1500</text>
<path d="M108 837.0 h3" stroke="#666" stroke-width="1.3" fill="none"/>
<text transform="translate(100.3,841.0) rotate(30)" font-size="12.5" font-style="italic" fill="#333" text-anchor="end">2000</text>
<path d="M108 812.0 h3" stroke="#666" stroke-width="1.3" fill="none"/>
<text transform="translate(100.3,816.0) rotate(30)" font-size="12.5" font-style="italic" fill="#333" text-anchor="end">2500</text>
<path d="M108 787.0 h3" stroke="#666" stroke-width="1.3" fill="none"/>
<text transform="translate(100.3,791.0) rotate(30)" font-size="12.5" font-style="italic" fill="#333" text-anchor="end">3000</text>
<path d="M108 762.0 h3" stroke="#666" stroke-width="1.3" fill="none"/>
<text transform="translate(100.3,766.0) rotate(30)" font-size="12.5" font-style="italic" fill="#333" text-anchor="end">3500</text>
<text transform="translate(57,848.9) rotate(-90)" font-size="16" fill="#000" text-anchor="middle">kg/Jahr</text>
</g>
<circle cx="785.1" cy="733.2" r="7" fill="none" stroke="#111" stroke-width="2"/><circle cx="785.1" cy="733.2" r="4" fill="#111"/>
<text x="804.6" y="738.3" font-size="14" fill="#333" textLength="50.6" lengthAdjust="spacing">absolut</text>
<circle cx="880" cy="733.2" r="7" fill="none" stroke="#666" stroke-width="1.8"/>
<text x="899.8" y="738.3" font-size="14" fill="#333" textLength="66" lengthAdjust="spacing">spezifisch</text>
<rect x="1018.4" y="727" width="13.2" height="13.2" rx="1.5" fill="none" stroke="#666" stroke-width="1.7"/>
<text x="1045" y="738.3" font-size="14" fill="#333" textLength="139.8" lengthAdjust="spacing">Witterungsbereinigt</text>
<rect x="1242.3" y="752" width="20" height="20" fill="#e2e2e2"/>
<text x="1270.8" y="766.7" font-size="13" fill="#444">Allgemein-Strom</text>
<rect x="1242.3" y="784" width="20" height="20" fill="#b4dff8"/>
<text x="1270.8" y="798.7" font-size="13" fill="#444">Warmwasser (Prognose)</text>
<rect x="1242.3" y="816" width="20" height="20" fill="#fdc99b"/>
<text x="1270.8" y="830.7" font-size="13" fill="#444">Raumwärme (Prognose)</text>
<rect x="1242.3" y="848" width="20" height="20" fill="#74c0fc"/>
<text x="1270.8" y="862.7" font-size="13" fill="#444">Warmwasser (Verbräuche)</text>
<rect x="1242.3" y="880" width="20" height="20" fill="#fea057"/>
<text x="1270.8" y="894.7" font-size="13" fill="#444">Raumwärme (Verbräuche)</text>
<rect x="1242.3" y="912" width="20" height="20" fill="#ffff44"/>
<text x="1270.8" y="926.7" font-size="13" fill="#444">Solar</text>
</svg>
</body></html>
